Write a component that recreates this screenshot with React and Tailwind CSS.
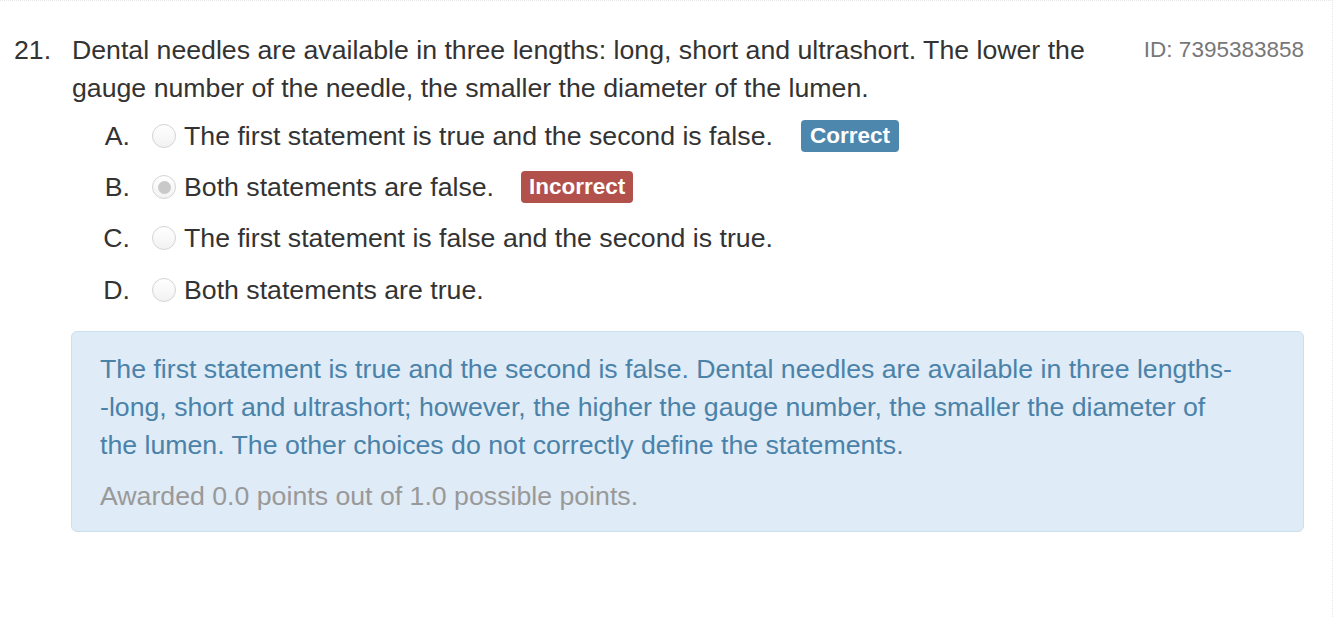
const options = [
  { letter: 'A.', text: 'The first statement is true and the second is false.', badge: 'correct' },
  { letter: 'B.', text: 'Both statements are false.', badge: 'incorrect', selected: true },
  { letter: 'C.', text: 'The first statement is false and the second is true.' },
  { letter: 'D.', text: 'Both statements are true.' },
];

const Radio = ({ selected }) => (
  <span className="flex h-[24px] w-[24px] shrink-0 items-center justify-center rounded-full border border-[#d4d4d4] bg-gradient-to-b from-[#ffffff] to-[#f2f2f2]">
    {selected && <span className="h-[13px] w-[13px] rounded-full bg-[#c9c9c9]" />}
  </span>
);

export default function App() {
  return (
    <div
      className="min-h-[617px] w-[1333px] border-t border-r border-dotted border-[#e6e6e6] bg-white text-[26.7px] text-[#333333]"
      style={{ fontFamily: '"Liberation Sans", Arial, sans-serif' }}
    >
      {/* Question */}
      <div className="flex pt-[30px] pr-[28px] pl-[14px] leading-[38px]">
        <div className="w-[58px] shrink-0">21.</div>
        <div className="flex-1">
          Dental needles are available in three lengths: long, short and ultrashort. The lower the
          gauge number of the needle, the smaller the diameter of the lumen.
        </div>
        <div className="ml-[30px] shrink-0 text-[22.5px] text-[#777777]">ID: 7395383858</div>
      </div>

      {/* Choices */}
      <div className="mt-[3px] pl-[72px]">
        {options.map((o) => (
          <div key={o.letter} className="flex h-[51.4px] items-center">
            <span className="w-[58px] text-right">{o.letter}</span>
            <span className="ml-[22px]">
              <Radio selected={o.selected} />
            </span>
            <span className="ml-[8px]">{o.text}</span>
            {o.badge === 'correct' && (
              <span className="ml-[28px] rounded-[4px] bg-[#4d87ad] px-[9px] text-[22.5px] leading-[32px] font-bold text-white">
                Correct
              </span>
            )}
            {o.badge === 'incorrect' && (
              <span className="ml-[27px] rounded-[4px] bg-[#b2504b] px-[8px] text-[22.5px] leading-[32px] font-bold text-white">
                Incorrect
              </span>
            )}
          </div>
        ))}
      </div>

      {/* Explanation */}
      <div className="mt-[15px] mr-[28px] ml-[71px] rounded-[6px] border border-[#c9e1ee] bg-[#dfebf6] pt-[18px] pr-[20px] pb-[16px] pl-[28px] leading-[38px]">
        <p className="text-[#4a82a9]">
          The first statement is true and the second is false. Dental needles are available in three lengths-
          <br />
          -long, short and ultrashort; however, the higher the gauge number, the smaller the diameter of
          <br />
          the lumen. The other choices do not correctly define the statements.
        </p>
        <p className="mt-[13px] text-[#999999]">Awarded 0.0 points out of 1.0 possible points.</p>
      </div>
    </div>
  );
}
